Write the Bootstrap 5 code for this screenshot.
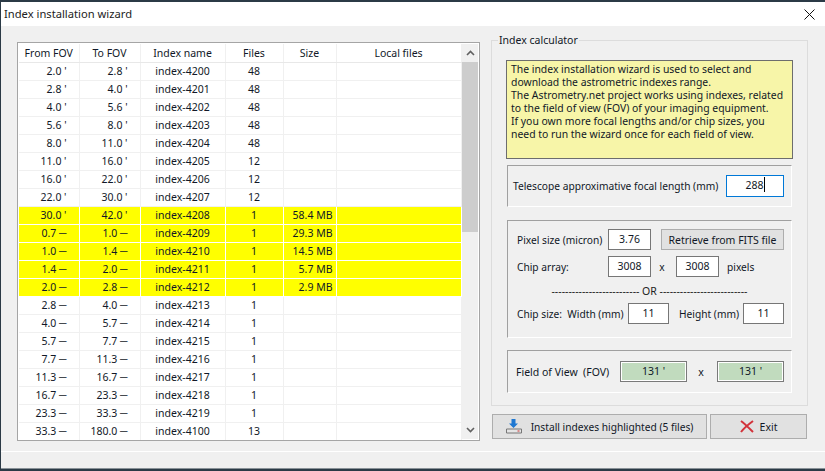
<!DOCTYPE html>
<html lang="en"><head><meta charset="utf-8"><title>Index installation wizard</title>
<link rel="stylesheet" href="https://cdn.jsdelivr.net/npm/bootstrap@5.3.0/dist/css/bootstrap.min.css">
<style>
html,body{height:471px;overflow:hidden}
body{background:#2b3a46;padding:2px 0 2px 1px;font:10.5px/14px "Noto Sans","Liberation Sans",sans-serif;color:#111827}
.wiz{width:824px;height:467px;background:#f0f0f0;border-bottom:1px solid #8a9298}
.tbar{height:24px;background:#fff;padding:0 0 0 3px;font-size:11.2px;color:#222}
.tbar svg{margin-right:10px}
.wbody{height:426px;border-bottom:1px solid #fff}
.gridwrap{margin:16px 0 0 16px;width:463px;height:399px;border:1px solid #a5a5a5;background:#fff;padding:1px;flex:none}
.idx{table-layout:fixed;border-collapse:collapse;width:442px;margin:0;--bs-table-bg:transparent;--bs-table-color:#111827;color:#111827}
.idx th,.idx td{height:18px;padding:0;border:solid #f0f0f0;border-width:0 1px 1px 0;font:inherit;text-align:center;vertical-align:middle;line-height:14px;box-shadow:none;background:transparent}
.idx th{border-bottom-width:1px;border-bottom-color:#e8e8e8}
.idx td.fv{text-align:right;padding-right:12px}
.idx td.sz{text-align:right;padding-right:3px}
.idx tr.hl td{background:#ff0;border-color:#fff}
.idx tr:last-child td{border-bottom:0}
.sbar{width:16px;background:#f0f0f0;flex:none}
.sthumb{background:#cdcdcd;height:170px;flex:none}
.sbtn{height:18px}
.sbtn svg{display:block}
.side{width:317px;margin-left:11px;flex:none;font-size:10.2px}
.calc{position:relative;margin-top:14px;width:317px;height:366px;border:1px solid #dcdcdc;padding:19px 14px 0 14px}
.calclbl{position:absolute;left:6px;top:-8px;background:#f0f0f0;padding:0 1px;line-height:14px;font-size:10.5px}
.note{width:287px;height:99px;background:#f7f5a8;border:1px solid #6d6d6d;padding:2px 4px;line-height:13px;font-size:10.4px}
.grp{width:285px;margin-left:1px;border-top:1px solid #a0a0a0;border-left:1px solid #a0a0a0;border-bottom:1px solid #fff;border-right:1px solid #fff}
.g1{height:42px;margin-top:6px;padding:0 7px 0 5px}
.g2{height:118px;margin-top:13px;padding:8px 7px 0 9px}
.g3{height:43px;margin-top:12px;padding:0 7px 0 8px;font-size:10.5px}
.ro{height:21px;background:#fff;border:1px solid #767676;text-align:center;line-height:19px;flex:none;font-size:10.5px}
.focal{width:58px;height:22px;border-color:#0078d7}
.caret{display:inline-block;width:1px;height:15px;background:#000;vertical-align:-3px}
.wnum{width:43px}.wsm{width:41px}
.fovb{width:67px;background:#c1dbbe;border:1px solid #7a7a7a;box-shadow:inset 0 0 0 1px #fff;line-height:19px}
.wbtn{background:#e1e1e1;border:1px solid #adadad;border-radius:0;color:#111827;font:inherit;padding:0;--bs-btn-hover-bg:#e1e1e1}
.rbtn{width:123px;height:21px;margin-left:10px;font-size:10.5px}
.lb{width:91px;flex:none}
.lbc{width:111px;flex:none}
.lbf{width:104px;flex:none}
.xa{width:6px;margin:0 11px 0 8px;text-align:center}
.xb{width:6px;margin:0 13px 0 11px;text-align:center}
.px{margin-left:8px}
.r2{height:21px}
.r2+.r2{margin-top:6px}
.orln{height:14px;margin:7px 0 5px -2px;text-align:center;white-space:pre;color:#222;font-size:10.5px}
.bbar{margin-top:8px;margin-left:1px;gap:3px}
.binst{width:215px;height:25px;gap:9px}
.bexit{width:97px;height:25px;gap:6px;font-size:10.5px}
</style></head>
<body>
<div class="wiz">
 <div class="tbar d-flex align-items-center justify-content-between"><span>Index installation wizard</span>
  <svg width="11" height="11" viewBox="0 0 11 11"><path d="M.5.5l10 10M10.500.5l-10 10" stroke="#111" fill="none"/></svg></div>
 <div class="wbody d-flex">
  <div class="gridwrap d-flex">
   <table class="table idx">
    <colgroup><col style="width:60px"><col style="width:61px"><col style="width:85px"><col style="width:58px"><col style="width:53px"><col style="width:125px"></colgroup>
    <thead><tr><th>From FOV</th><th>To FOV</th><th>Index name</th><th>Files</th><th>Size</th><th>Local files</th></tr></thead>
    <tbody>
<tr><td class="fv">2.0 '</td><td class="fv">2.8 '</td><td>index-4200</td><td>48</td><td class="sz"></td><td></td></tr>
<tr><td class="fv">2.8 '</td><td class="fv">4.0 '</td><td>index-4201</td><td>48</td><td class="sz"></td><td></td></tr>
<tr><td class="fv">4.0 '</td><td class="fv">5.6 '</td><td>index-4202</td><td>48</td><td class="sz"></td><td></td></tr>
<tr><td class="fv">5.6 '</td><td class="fv">8.0 '</td><td>index-4203</td><td>48</td><td class="sz"></td><td></td></tr>
<tr><td class="fv">8.0 '</td><td class="fv">11.0 '</td><td>index-4204</td><td>48</td><td class="sz"></td><td></td></tr>
<tr><td class="fv">11.0 '</td><td class="fv">16.0 '</td><td>index-4205</td><td>12</td><td class="sz"></td><td></td></tr>
<tr><td class="fv">16.0 '</td><td class="fv">22.0 '</td><td>index-4206</td><td>12</td><td class="sz"></td><td></td></tr>
<tr><td class="fv">22.0 '</td><td class="fv">30.0 '</td><td>index-4207</td><td>12</td><td class="sz"></td><td></td></tr>
<tr class="hl"><td class="fv">30.0 '</td><td class="fv">42.0 '</td><td>index-4208</td><td>1</td><td class="sz">58.4 MB</td><td></td></tr>
<tr class="hl"><td class="fv">0.7 ─</td><td class="fv">1.0 ─</td><td>index-4209</td><td>1</td><td class="sz">29.3 MB</td><td></td></tr>
<tr class="hl"><td class="fv">1.0 ─</td><td class="fv">1.4 ─</td><td>index-4210</td><td>1</td><td class="sz">14.5 MB</td><td></td></tr>
<tr class="hl"><td class="fv">1.4 ─</td><td class="fv">2.0 ─</td><td>index-4211</td><td>1</td><td class="sz">5.7 MB</td><td></td></tr>
<tr class="hl"><td class="fv">2.0 ─</td><td class="fv">2.8 ─</td><td>index-4212</td><td>1</td><td class="sz">2.9 MB</td><td></td></tr>
<tr><td class="fv">2.8 ─</td><td class="fv">4.0 ─</td><td>index-4213</td><td>1</td><td class="sz"></td><td></td></tr>
<tr><td class="fv">4.0 ─</td><td class="fv">5.7 ─</td><td>index-4214</td><td>1</td><td class="sz"></td><td></td></tr>
<tr><td class="fv">5.7 ─</td><td class="fv">7.7 ─</td><td>index-4215</td><td>1</td><td class="sz"></td><td></td></tr>
<tr><td class="fv">7.7 ─</td><td class="fv">11.3 ─</td><td>index-4216</td><td>1</td><td class="sz"></td><td></td></tr>
<tr><td class="fv">11.3 ─</td><td class="fv">16.7 ─</td><td>index-4217</td><td>1</td><td class="sz"></td><td></td></tr>
<tr><td class="fv">16.7 ─</td><td class="fv">23.3 ─</td><td>index-4218</td><td>1</td><td class="sz"></td><td></td></tr>
<tr><td class="fv">23.3 ─</td><td class="fv">33.3 ─</td><td>index-4219</td><td>1</td><td class="sz"></td><td></td></tr>
<tr><td class="fv">33.3 ─</td><td class="fv">180.0 ─</td><td>index-4100</td><td>13</td><td class="sz"></td><td></td></tr>
    </tbody>
   </table>
   <div class="sbar ms-auto d-flex flex-column">
    <div class="sbtn d-flex align-items-center justify-content-center"><svg width="9" height="6" viewBox="0 0 9 6"><path d="M1 5l3.500-3.500L8 5" stroke="#606060" stroke-width="1.6" fill="none"/></svg></div>
    <div class="sthumb"></div>
    <div class="flex-grow-1"></div>
    <div class="sbtn d-flex align-items-center justify-content-center"><svg width="9" height="6" viewBox="0 0 9 6"><path d="M1 1l3.500 3.500L8 1" stroke="#606060" stroke-width="1.6" fill="none"/></svg></div>
   </div>
  </div>
  <div class="side">
   <div class="calc">
    <span class="calclbl">Index calculator</span>
    <div class="note">The index installation wizard is used to select and<br>download the astrometric indexes range.<br>The Astrometry.net project works using indexes, related<br>to the field of view (FOV) of your imaging equipment.<br>If you own more focal lengths and/or chip sizes, you<br>need to run the wizard once for each field of view.</div>
    <div class="grp g1 d-flex align-items-center justify-content-between"><span>Telescope approximative focal length (mm)</span><div class="ro focal">288<span class="caret"></span></div></div>
    <div class="grp g2">
     <div class="r2 d-flex align-items-center"><span class="lb">Pixel size (micron)</span><div class="ro wnum">3.76</div><button type="button" class="btn wbtn rbtn">Retrieve from FITS file</button></div>
     <div class="r2 d-flex align-items-center"><span class="lb">Chip array:</span><div class="ro wnum">3008</div><span class="xa">x</span><div class="ro wnum">3008</div><span class="px">pixels</span></div>
     <div class="orln">-------------------------- OR --------------------------</div>
     <div class="r2 d-flex align-items-center"><span class="lbc">Chip size:&nbsp; Width (mm)</span><div class="ro wsm">11</div><span class="ms-auto me-1">Height (mm)</span><div class="ro wsm">11</div></div>
    </div>
    <div class="grp g3 d-flex align-items-center"><span class="lbf">Field of View&nbsp; (FOV)</span><div class="ro fovb">131 '</div><span class="xb">x</span><div class="ro fovb">131 '</div></div>
   </div>
   <div class="bbar d-flex">
    <button type="button" class="btn wbtn binst d-flex align-items-center justify-content-center">
     <svg width="16" height="15" viewBox="0 0 16 15"><path d="M5.500 0h4v4.500h2.500L7.500 9 3 4.500h2.500z" fill="#1e78d2"/><path d="M.5 10h15v4H.5z" fill="#e4e4e4" stroke="#777"/><path d="M11.500 12h2" stroke="#c33"/></svg>
     <span>Install indexes highlighted (5 files)</span></button>
    <button type="button" class="btn wbtn bexit d-flex align-items-center justify-content-center">
     <svg width="14" height="13" viewBox="0 0 14 13"><path d="M1 1c4 3 8 7 12 11M13 1C9 4 4 8 1 12" stroke="#d2323a" stroke-width="2" fill="none"/></svg>
     <span>Exit</span></button>
   </div>
  </div>
 </div>
</div>
</body></html>
